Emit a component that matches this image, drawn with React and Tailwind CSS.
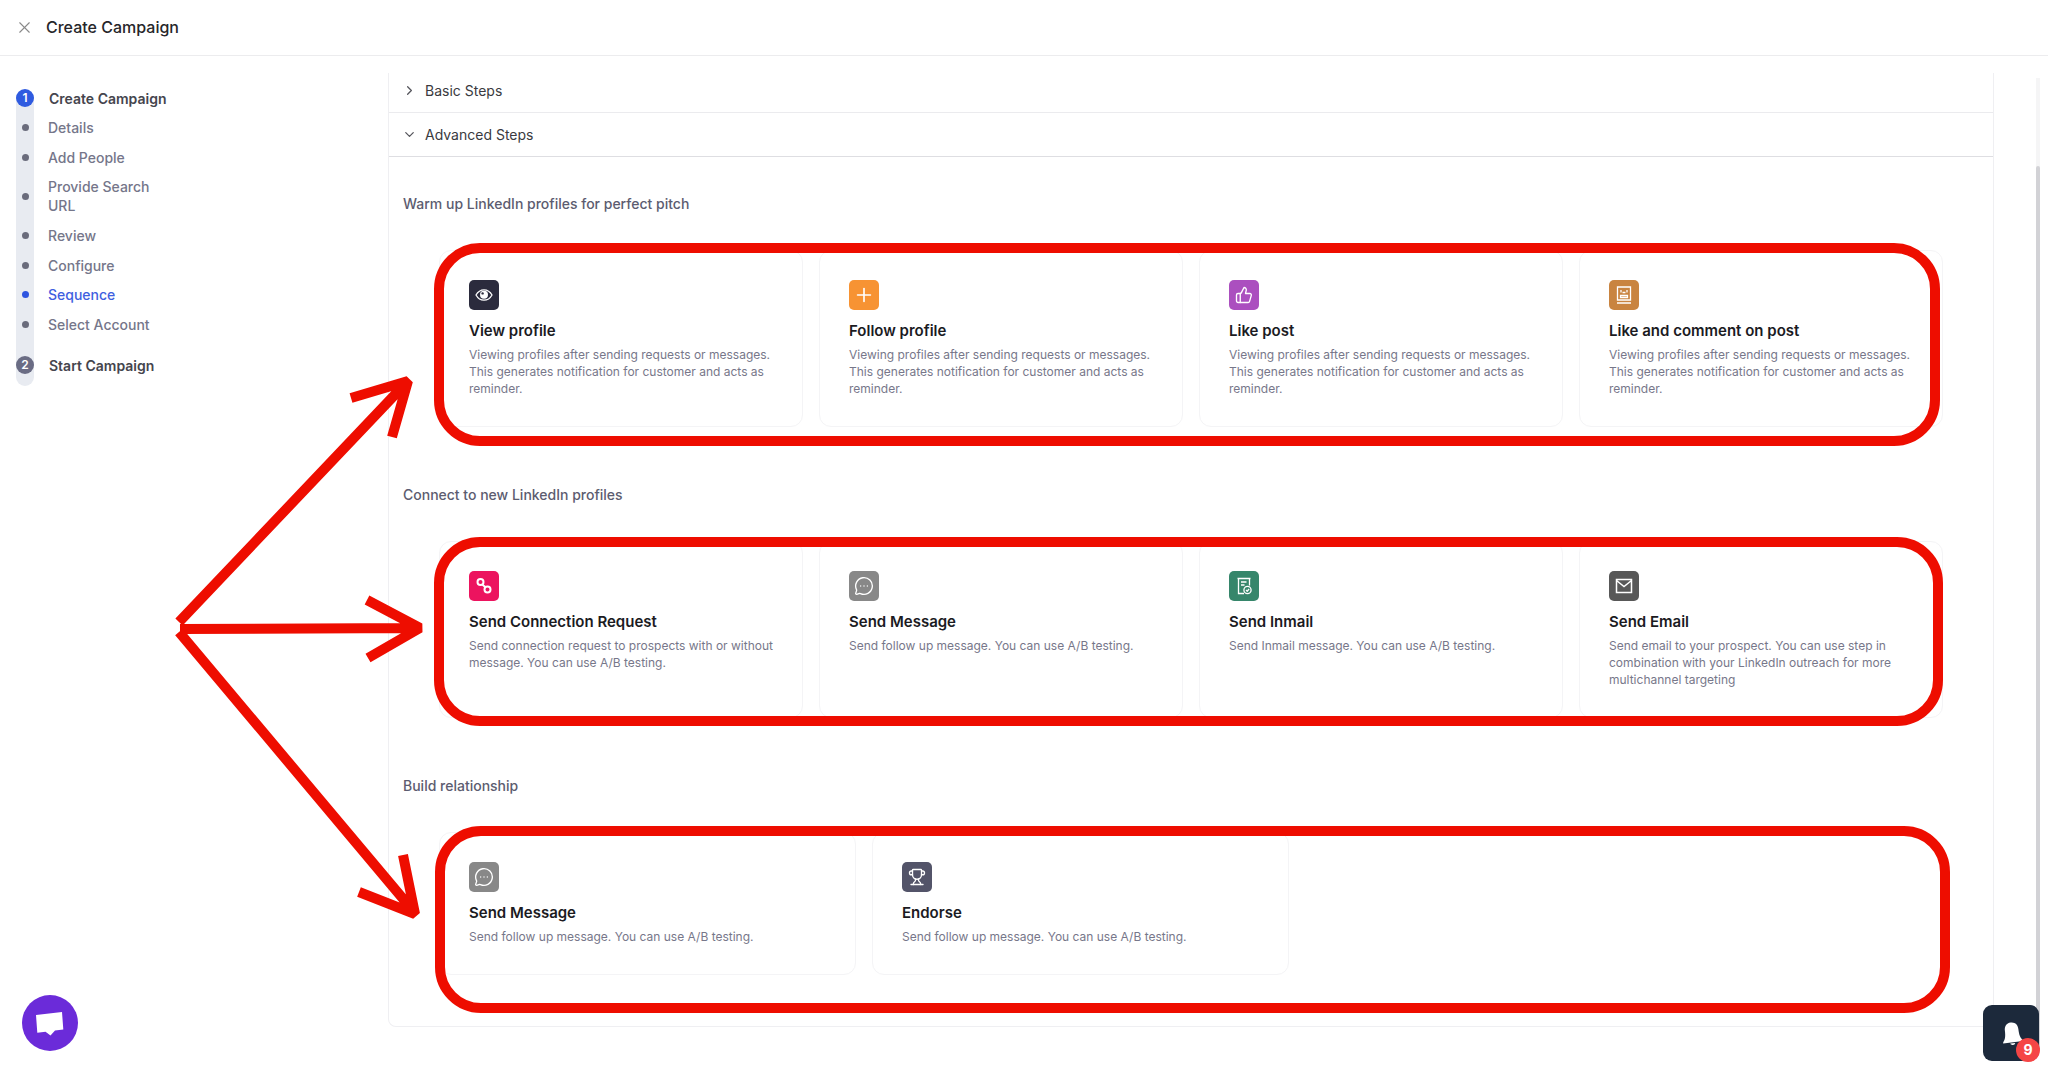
import React from "react";
import {
  X,
  ChevronRight,
  ChevronDown,
  Plus,
  ThumbsUp,
  MessageCircleMore,
  Trophy,
} from "lucide-react";

const EyeIcon = () => (
  <svg width="18" height="18" viewBox="0 0 18 18" fill="none">
    <path
      d="M1 9c2-3.6 4.800-5.200 8-5.200S15 5.400 17 9c-2 3.600-4.800 5.200-8 5.200S3 12.600 1 9Z"
      stroke="white"
      strokeWidth="1.3"
    />
    <circle cx="9" cy="8.800" r="4" fill="white" />
    <circle cx="7.600" cy="7.400" r="1.200" fill="#2b2b3d" />
  </svg>
);

const CommentIcon = () => (
  <svg width="18" height="18" viewBox="0 0 18 18" fill="none" stroke="white" strokeWidth="1.3">
    <path d="M2.500 1h13v13h-13zM2 17h14" />
    <path d="M6 4v2.500M12 4v2.500M7.500 6.500h3M5.500 11.500v-2h7v2z" />
  </svg>
);

const LinkIcon = () => (
  <svg width="18" height="18" viewBox="0 0 18 18" fill="none" stroke="white" strokeWidth="2">
    <circle cx="5.500" cy="5" r="3" />
    <circle cx="12.500" cy="12.500" r="3" />
    <path d="M7.300 7.500l3.200 2.700" />
  </svg>
);

const InmailIcon = () => (
  <svg width="18" height="18" viewBox="0 0 18 18" fill="none" stroke="white" strokeWidth="1.3">
    <path d="M9 16.500H3.500V1.500h11v7M2.500 1.500h13M6 5h5.500M6 8h3.500" />
    <circle cx="12.500" cy="13" r="3.600" />
    <path d="M11 13l1.200 1.200 1.900-2.200" />
  </svg>
);

const MailIcon = () => (
  <svg width="18" height="18" viewBox="0 0 18 18" fill="none" stroke="white" strokeWidth="1.5">
    <path d="M1.500 2.500h15v13h-15zM1.500 3.500L9 9.500l7.500-6" />
  </svg>
);

const PlusIcon = () => <Plus size={22} strokeWidth={1.8} />;
const ThumbIcon = () => <ThumbsUp size={18} strokeWidth={1.8} />;
const MessageIcon = () => <MessageCircleMore size={20} strokeWidth={1.6} />;
const TrophyIcon = () => <Trophy size={18} strokeWidth={1.8} />;

const VIEWING =
  "Viewing profiles after sending requests or messages. This generates notification for customer and acts as reminder.";
const FOLLOW_UP = "Send follow up message. You can use A/B testing.";

const sections = [
  {
    title: "Warm up LinkedIn profiles for perfect pitch",
    layout: "grid grid-cols-4",
    marker: "-left-[5px] -top-[7px] right-[3px] -bottom-[19px]",
    cards: [
      { name: "View profile", text: VIEWING, color: "bg-[#2b2b3d]", icon: EyeIcon },
      { name: "Follow profile", text: VIEWING, color: "bg-[#f79333]", icon: PlusIcon },
      { name: "Like post", text: VIEWING, color: "bg-[#ab4fbf]", icon: ThumbIcon },
      { name: "Like and comment on post", text: VIEWING, color: "bg-[#c98440]", icon: CommentIcon },
    ],
  },
  {
    title: "Connect to new LinkedIn profiles",
    layout: "grid grid-cols-4",
    marker: "-left-[5px] -top-[4px] right-0 -bottom-[8px]",
    cards: [
      {
        name: "Send Connection Request",
        text: "Send connection request to prospects with or without message. You can use A/B testing.",
        color: "bg-[#ec145f]",
        icon: LinkIcon,
      },
      { name: "Send Message", text: FOLLOW_UP, color: "bg-[#888888]", icon: MessageIcon },
      {
        name: "Send Inmail",
        text: "Send Inmail message. You can use A/B testing.",
        color: "bg-[#36866b]",
        icon: InmailIcon,
      },
      {
        name: "Send Email",
        text: "Send email to your prospect. You can use step in combination with your LinkedIn outreach for more multichannel targeting",
        color: "bg-[#585858]",
        icon: MailIcon,
      },
    ],
  },
  {
    title: "Build relationship",
    layout: "flex",
    marker: "-left-[4px] -top-[6px] -right-[7px] -bottom-[38px]",
    cards: [
      { name: "Send Message", text: FOLLOW_UP, color: "bg-[#888888]", icon: MessageIcon, size: "w-[417px]" },
      { name: "Endorse", text: FOLLOW_UP, color: "bg-[#535469]", icon: TrophyIcon, size: "w-[417px]" },
    ],
  },
];

const steps = [
  "Details",
  "Add People",
  "Provide Search URL",
  "Review",
  "Configure",
  "Sequence",
  "Select Account",
];

const Sidebar = () => (
  <aside className="w-[388px] shrink-0 pl-4 pt-8">
    <div className="relative w-[170px] pb-[11px]">
      {/* rail behind the dots */}
      <div className="absolute left-0 top-[10px] bottom-0 w-[18px] rounded-b-full bg-[#e8ebf1]" />
      <div className="relative">
        <div className="flex items-center gap-[15px] h-5">
          <span className="size-[18px] rounded-full bg-[#2f5be0] text-white text-[12px] font-semibold flex items-center justify-center">
            1
          </span>
          <span className="text-[14px] leading-[19px] font-semibold text-[#45454d] whitespace-nowrap">
            Create Campaign
          </span>
        </div>
        <ul className="mt-[10px] min-h-[216px] flex flex-col justify-between">
          {steps.map((step) => {
            const isActive = step === "Sequence";
            return (
              <li key={step} className="flex items-center gap-[14px]">
                <span className="w-[18px] shrink-0 flex justify-center">
                  <span className={`size-[7px] rounded-full ${isActive ? "bg-[#2f55e0]" : "bg-[#6a6c7c]"}`} />
                </span>
                <a
                  href="#"
                  className={`max-w-[110px] text-[14px] leading-[19px] font-medium ${
                    isActive ? "text-[#3f60e0]" : "text-[#75768a]"
                  }`}
                >
                  {step}
                </a>
              </li>
            );
          })}
        </ul>
        <div className="mt-[21px] flex items-center gap-[15px] h-5">
          <span className="size-[18px] rounded-full bg-[#6a6c84] text-white text-[12px] font-semibold flex items-center justify-center">
            2
          </span>
          <span className="text-[14px] leading-[19px] font-semibold text-[#45454d] whitespace-nowrap">
            Start Campaign
          </span>
        </div>
      </div>
    </div>
  </aside>
);

const StepCard = ({ name, text, color, icon: Icon, size = "" }) => (
  <button
    type="button"
    className={`flex flex-col items-start p-[29px] text-left bg-white border border-[#f4f4f6] rounded-xl ${size}`}
  >
    <span className={`size-[30px] rounded-[5px] text-white flex items-center justify-center ${color}`}>
      <Icon />
    </span>
    <span className="mt-[10px] text-[15px] leading-[22px] font-semibold text-[#1b1b1f]">{name}</span>
    <span className="mt-1 text-[12px] leading-[17px] text-[#77778a]">{text}</span>
  </button>
);

const Arrows = () => (
  <svg
    className="absolute left-[170px] top-[360px] pointer-events-none"
    width="270"
    height="570"
    viewBox="170 360 270 570"
    fill="none"
    stroke="#ee0d00"
    strokeWidth="10"
    strokeLinejoin="bevel"
  >
    <path d="M179 622L407 382M351 398L408 381L392 437" />
    <path d="M180 629L420 628M367 600L420 628L368 658" />
    <path d="M179 632L415 913M403 855L415 914L359 892" />
  </svg>
);

const App = () => {
  return (
    <div className="relative min-h-screen bg-white flex flex-col font-['Inter',sans-serif] overflow-hidden">
      <header className="h-14 pb-px border-b border-[#ececee] flex items-center gap-3 pl-[15px]">
        <button type="button" aria-label="Close" className="text-[#8a8a8a]">
          <X size={19} strokeWidth={1.4} />
        </button>
        <h1 className="text-[16px] leading-6 font-medium text-[#26262a]">Create Campaign</h1>
      </header>

      <div className="flex flex-1">
        <Sidebar />

        <main className="flex-1 pt-[17px]">
          <div className="border-x border-b border-[#efeff2] rounded-b-lg">
            <button
              type="button"
              className="w-full h-10 pb-1 pl-[13px] flex items-center gap-[8px] border-b border-[#ebebee]"
            >
              <ChevronRight size={15} strokeWidth={2} className="text-[#55555c]" />
              <span className="text-[14px] leading-5 text-[#3a3a40]">Basic Steps</span>
            </button>
            <button
              type="button"
              className="w-full h-11 pl-[13px] flex items-center gap-[8px] border-b border-[#dedee2]"
            >
              <ChevronDown size={15} strokeWidth={2} className="text-[#55555c]" />
              <span className="text-[14px] leading-5 text-[#3a3a40]">Advanced Steps</span>
            </button>

            <div className="pt-[37px] pb-[51px] flex flex-col gap-[58px]">
              {sections.map((section) => (
                <section key={section.title}>
                  <h2 className="pl-[14px] text-[14px] leading-5 font-medium text-[#5c5c70]">{section.title}</h2>
                  <div className="relative mt-9 mx-[50px]">
                    <div className={`${section.layout} gap-4`}>
                      {section.cards.map((card) => (
                        <StepCard key={card.name} {...card} />
                      ))}
                    </div>
                    <div
                      className={`absolute border-[10px] border-[#ee0d00] rounded-[46px] pointer-events-none ${section.marker}`}
                    />
                  </div>
                </section>
              ))}
            </div>
          </div>
        </main>

        {/* scroll track */}
        <div className="w-1 ml-[42px] mr-2 mt-[22px] mb-5 bg-[#f5f5f6] flex flex-col pt-[88px]">
          <div className="flex-1 rounded-full bg-[#d2d2d6]" />
        </div>
      </div>

      <Arrows />

      <button
        type="button"
        aria-label="Chat"
        className="absolute left-[22px] bottom-[19px] size-14 rounded-full bg-[#6b2bd9]"
      >
        <svg width="56" height="56" viewBox="0 0 56 56" fill="white">
          <path d="M14 20L40 17L41.300 34.500L33 35.500L28.500 40.500L23.500 36.800L15.300 37.800Z" />
        </svg>
      </button>

      <button
        type="button"
        aria-label="Notifications"
        className="absolute right-[9px] bottom-[9px] size-14 rounded-[9px] bg-[#1c293b]"
      >
        <svg width="56" height="56" viewBox="0 0 56 56" fill="white">
          <g transform="rotate(-7 29 28)">
            <path d="M29 17.500c-4.500 0-6.800 3.200-6.800 7.500 0 6-.8 8.500-3.200 11.500v.8h20v-.8c-2.400-3-3.200-5.500-3.200-11.500 0-4.300-2.300-7.500-6.800-7.500ZM26 38.300h5c-.4 1.200-1.300 1.700-2.500 1.700s-2.100-.5-2.500-1.700Z" />
          </g>
        </svg>
        <span className="absolute -right-px -bottom-px size-6 rounded-full bg-[#f54545] text-white text-[14px] leading-6 font-bold text-center">
          9
        </span>
      </button>
    </div>
  );
};

export default App;
